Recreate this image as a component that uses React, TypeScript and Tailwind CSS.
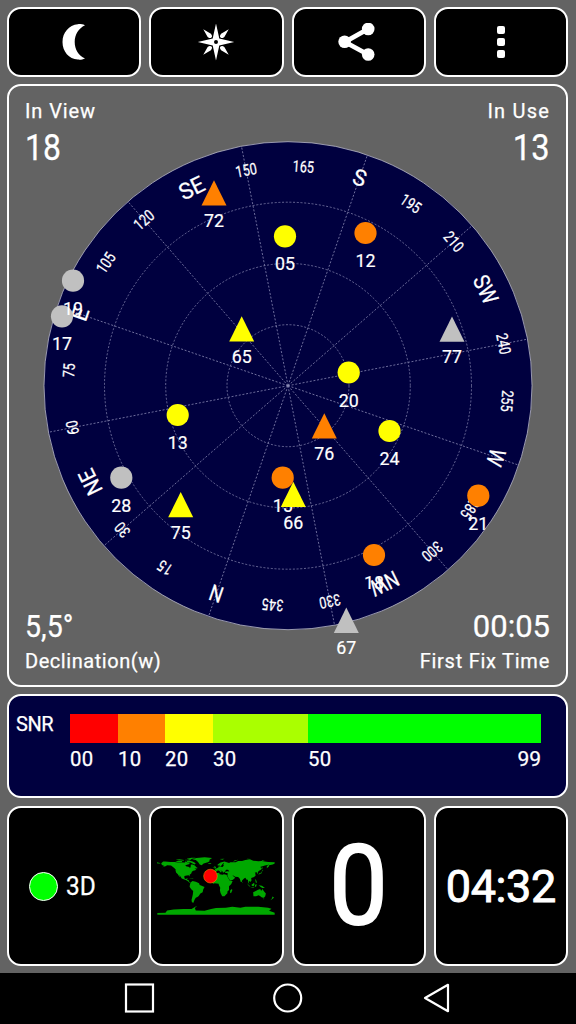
import type { ReactNode } from 'react';

type Shape = 'circle' | 'triangle';

interface Satellite {
  id: string;
  x: number;
  y: number;
  color: string;
  shape: Shape;
}

const NAVY = '#00003f';
const ORANGE = '#ff8000';
const YELLOW = '#ffff00';
const GREY = '#c0c0c0';

const CX = 288;
const CY = 385.7;
const RADIUS = 244;
// South sits slightly clockwise of the top of the disc
const ROTATION = 19;

const satellites: Satellite[] = [
  { id: '05', x: 285, y: 236.3, color: YELLOW, shape: 'circle' },
  { id: '12', x: 365.5, y: 233, color: ORANGE, shape: 'circle' },
  { id: '13', x: 177.7, y: 415, color: YELLOW, shape: 'circle' },
  { id: '15', x: 282.7, y: 477.7, color: ORANGE, shape: 'circle' },
  { id: '17', x: 62, y: 316.3, color: GREY, shape: 'circle' },
  { id: '18', x: 374, y: 555, color: ORANGE, shape: 'circle' },
  { id: '19', x: 73, y: 280.7, color: GREY, shape: 'circle' },
  { id: '20', x: 348.7, y: 372.5, color: YELLOW, shape: 'circle' },
  { id: '21', x: 478.3, y: 495.7, color: ORANGE, shape: 'circle' },
  { id: '24', x: 389.5, y: 431, color: YELLOW, shape: 'circle' },
  { id: '28', x: 121.3, y: 477.7, color: GREY, shape: 'circle' },
  { id: '65', x: 241.7, y: 329, color: YELLOW, shape: 'triangle' },
  { id: '66', x: 293.3, y: 494.5, color: YELLOW, shape: 'triangle' },
  { id: '67', x: 346.3, y: 620.3, color: GREY, shape: 'triangle' },
  { id: '72', x: 214, y: 193, color: ORANGE, shape: 'triangle' },
  { id: '75', x: 180.7, y: 504.7, color: YELLOW, shape: 'triangle' },
  { id: '76', x: 324.3, y: 426, color: ORANGE, shape: 'triangle' },
  { id: '77', x: 452, y: 329.2, color: GREY, shape: 'triangle' },
];

const cardinals: Record<number, string> = {
  0: 'N',
  45: 'NE',
  90: 'E',
  135: 'SE',
  180: 'S',
  225: 'SW',
  270: 'W',
  315: 'NW',
};

const headings = Array.from({ length: 24 }, (_, i) => i * 15);
const spokes = Array.from({ length: 12 }, (_, i) => i * 30);

function labelWidth(text: string, cardinal: boolean) {
  if (!cardinal) return text.length * 7.1;
  if (text === 'NW' || text === 'SW') return 29;
  if (text.length === 2) return 26;
  return text === 'W' ? 17 : 13;
}

function Tile({ children }: { children: ReactNode }) {
  return (
    <div className="flex items-center justify-center rounded-[14px] border-2 border-white bg-black">
      {children}
    </div>
  );
}

function MoonIcon() {
  return (
    <svg className="h-9 w-6" viewBox="62 24 24 36" fill="#fff">
      <path d="M85 25.2C82 24.1 80 24 77.8 24.2C69 25 62.5 32.5 62.5 42S69 59 77.8 59.6C80.5 59.8 82.5 59.6 85 58.4C78.5 55.5 74.7 49.5 74.7 42S78.5 28.3 85 25.2Z" />
    </svg>
  );
}

function StarIcon() {
  return (
    <svg className="h-10 w-10" viewBox="-20 -20 40 40" fill="#fff">
      <path
        fillRule="evenodd"
        d="M0-18.5L3.3-3.5L18.2 0L3.3 3.5L0 18.5L-3.3 3.5L-18.2 0L-3.3-3.5ZM0-2A2 2 0 1 0 0 2A2 2 0 1 0 0-2Z"
      />
      {[45, 135, 225, 315].map((a) => (
        <path key={a} transform={`rotate(${a})`} d="M0-18L2.3-9.5C2-6.8 1-6.5 0-6.5S-2-6.8-2.3-9.5Z" />
      ))}
    </svg>
  );
}

function ShareIcon() {
  return (
    <svg className="-ml-[3px] h-[38px] w-[38px]" viewBox="338 23 38 38" fill="#fff">
      <path d="M368 29L345 42L368 54.5" fill="none" stroke="#fff" strokeWidth="4.8" />
      <circle cx="344.6" cy="41.7" r="6.3" />
      <circle cx="368.2" cy="29" r="6.3" />
      <circle cx="368.2" cy="54.5" r="6.3" />
    </svg>
  );
}

function Marker({ sat }: { sat: Satellite }) {
  return (
    <g>
      {sat.shape === 'circle' ? (
        <circle cx={sat.x} cy={sat.y} r="11.1" fill={sat.color} />
      ) : (
        <path d={`M${sat.x} ${sat.y - 12.7}l12.5 25.3h-25z`} fill={sat.color} />
      )}
      <text
        x={sat.x}
        y={sat.y + 34}
        textAnchor="middle"
        fontSize="18.5"
        fontWeight="400"
        stroke="#fff"
        strokeWidth="0.2"
        textLength="20"
        lengthAdjust="spacingAndGlyphs"
      >
        {sat.id}
      </text>
    </g>
  );
}

function SkyView() {
  return (
    <svg className="h-full w-full [grid-area:1/1]" viewBox="9 86 557 599" fill="#fff">
      <circle cx={CX} cy={CY} r={RADIUS} fill={NAVY} stroke="#b8b8c8" strokeWidth="0.8" />
      <g stroke="#9090b8" strokeWidth="0.7" strokeDasharray="2 1.7" fill="none">
        {[61, 122.3, 183.5].map((r) => (
          <circle key={r} cx={CX} cy={CY} r={r} />
        ))}
        {spokes.map((a) => (
          <path key={a} d={`M${CX} ${CY}v-${RADIUS}`} transform={`rotate(${a + ROTATION} ${CX} ${CY})`} />
        ))}
      </g>
      {headings.map((h) => {
        const isCardinal = h in cardinals;
        const text = isCardinal ? cardinals[h] : String(h);
        return (
          <text
            key={h}
            x={CX}
            y={CY - (isCardinal ? 212 : 214)}
            textAnchor="middle"
            fontSize={isCardinal ? 22.5 : 16}
            fontWeight="400"
            stroke="#fff"
            strokeWidth="0.25"
            textLength={labelWidth(text, isCardinal)}
            lengthAdjust="spacingAndGlyphs"
            transform={`rotate(${h - 180 + ROTATION} ${CX} ${CY})`}
          >
            {text}
          </text>
        );
      })}
      {satellites.map((sat) => (
        <Marker key={sat.id} sat={sat} />
      ))}
    </svg>
  );
}

// Coastlines in degrees: x is longitude, y is negative latitude
function WorldMap() {
  return (
    <svg className="-ml-px h-[58px] w-[118px]" viewBox="-181 -85 362 176" fill="#00a800" preserveAspectRatio="none">
      {/* North and Central America */}
      <path d="M-168-66L-162-71L-156-71L-140-69.5L-128-70L-115-68L-108-68L-95-68L-94-72L-86-68L-82-69L-81-64L-94-60L-92-57L-82-55L-80-51L-78-55L-77-62L-72-62L-65-59L-60-54L-56-52L-60-50L-66-50L-60-46L-66-44L-70-43L-74-40L-76-35L-81-31L-80-26L-82-28L-84-30L-90-29L-97-27L-97-22L-95-18L-91-19L-87-21L-89-16L-84-15L-83-10L-78-9L-80-7L-84-9L-88-13L-95-16L-105-20L-109-26L-114-31L-110-24L-113-26L-117-33L-122-37L-124-43L-124-48L-131-54L-138-59L-150-60L-155-57L-165-54L-158-58L-166-61Z" />
      {/* Arctic islands and Greenland */}
      <path d="M-125-72L-115-74L-105-73L-103-69L-115-69ZM-90-70L-88-74L-80-74L-72-71L-62-66L-66-62L-72-65L-78-68ZM-124-77L-112-78L-98-76L-100-74L-112-75ZM-95-77L-80-76L-90-80L-75-83L-62-83L-75-79L-80-75L-93-75ZM-73-78L-60-82L-35-84L-12-82L-20-77L-20-72L-25-69L-38-65L-44-60L-50-62L-53-67L-55-70L-62-76Z" />
      <path d="M-24-66L-14-66L-16-63.5L-23-63.5ZM-84-22L-75-20L-68-19L-72-18L-78-20ZM-181-69L-172-67L-170-65L-178-65L-181-66Z" />
      {/* South America */}
      <path d="M-78-8L-72-12L-62-10L-52-5L-50 0L-44 2L-35 6L-39 13L-41 22L-48 26L-53 33L-57 36L-62 39L-65 43L-68 50L-69 54L-74 52L-75 45L-73 37L-71 28L-70 18L-76 13L-81 5L-80-1Z" />
      {/* Africa and Madagascar */}
      <path d="M-17-15L-16-25L-10-31L-5-35L10-37L11-33L20-31L24-33L32-31L37-22L43-12L51-12L47-3L40 4L40 15L35 20L35 25L31 29L26 34L19 34L14 24L12 16L13 8L9 1L8-4L-4-5L-8-4L-14-9ZM44 16L49 12L50 16L46 25L43 23Z" />
      {/* Europe and Asia */}
      <path d="M-9-37L-9-43L-1-44L-4-48L4-52L8-54L8-57L12-56L20-55L24-59L22-62L25-65L22-66L18-61L14-56L11-59L5-59L5-62L14-68L26-71L40-67L44-69L60-69L68-73L80-73L90-76L104-78L114-74L130-72L140-73L160-70L180-69L180-65L174-62L163-60L162-56L156-51L156-58L164-62L150-59L135-55L141-52L138-46L132-43L128-39L129-35L126-35L125-39L118-39L122-37L120-34L122-30L117-24L108-21L109-14L105-9L101-13L100-8L104-2L98-8L98-16L94-16L90-22L86-20L80-14L79-9L76-9L73-19L68-24L58-25L56-27L50-30L56-24L59-22L52-16L44-13L39-20L35-28L36-36L28-37L27-40L35-42L41-41L37-46L31-46L28-42L24-38L21-38L20-42L13-45L18-40L15-38L9-44L3-43L0-39Z" />
      <path d="M-5-50L1-51L-2-56L-5-58L-5-54ZM-10-52L-6-54L-8-55ZM11-79L26-80L20-77ZM52-71L58-75L68-77L57-72ZM95-80L105-79L98-78ZM140-75L150-75L142-73Z" />
      {/* Islands of the Pacific and Indian oceans */}
      <path d="M130-31L136-34L140-36L141-41L145-44L142-45L139-38L132-35ZM142-46L144-54L142-54ZM80-9L82-7L80-6ZM120-18L123-15L126-7L122-8ZM95-5L104 3L106 6L101 3ZM105 6L114 7L119 9L112 8ZM109-1L117-7L118-1L115 4L110 2ZM119 5L120-1L125-2L123 5ZM131 1L141 2L150 9L142 9L136 5Z" />
      {/* Australia and New Zealand */}
      <path d="M114 22L122 18L129 14L136 12L137 16L141 17L142 11L147 19L153 26L151 34L147 39L141 38L136 34L131 31L123 34L115 34ZM145 41L148 41L147 44ZM173 35L178 38L174 42L167 46L172 40Z" />
      {/* Antarctica */}
      <path d="M-180 85L-155 84L-150 77L-130 74L-100 73L-75 73L-62 65L-58 64L-65 70L-62 77L-35 78L-15 73L0 70L30 69L50 66L75 69L90 66L130 66L160 69L170 72L163 78L180 84L180 90L-180 90Z" />
      <circle cx="-17" cy="-27" r="21" fill="#ff0000" stroke="#ffa000" strokeWidth="1.5" />
    </svg>
  );
}

const segments = [
  { label: '00', className: 'w-[48px] bg-[#ff0000]' },
  { label: '10', className: 'w-[47px] bg-[#ff8000]' },
  { label: '20', className: 'w-[48px] bg-[#ffff00]' },
  { label: '30', className: 'w-[95px] bg-[#aaff00]' },
  { label: '50', className: 'w-[233px] bg-[#00ff00]' },
];

function SnrPanel() {
  return (
    <div className="mt-[7px] flex h-[104px] rounded-[14px] border-2 border-white bg-[#00003f] pt-[18px] pl-[7px]">
      <div className="w-[54px] text-[20px] leading-5 tracking-[-0.5px]">SNR</div>
      <div>
        <div className="flex">
          {segments.map((s) => (
            <div key={s.label} className={s.className + ' h-[29px]'} />
          ))}
        </div>
        <div className="relative mt-[5px] flex text-[21px] leading-[22px]">
          {segments.map((s) => (
            <div key={s.label} className={s.className + ' bg-transparent'}>
              <span className="inline-block origin-left scale-x-[0.97] tracking-[0.3px]">{s.label}</span>
            </div>
          ))}
          <span className="absolute right-0">99</span>
        </div>
      </div>
    </div>
  );
}

export default function App() {
  return (
    <div className="flex h-[1024px] w-[576px] flex-col overflow-hidden bg-[#636363] font-['Roboto',sans-serif] font-normal text-white [-webkit-text-stroke:0.25px_white]">
      <div className="flex-1 pt-[7px] pr-[8px] pl-[7px]">
        <div className="grid h-[70px] grid-cols-4 gap-2">
          <Tile><MoonIcon /></Tile>
          <Tile><StarIcon /></Tile>
          <Tile><ShareIcon /></Tile>
          <Tile>
            <div className="flex flex-col gap-1">
              <i className="h-2 w-2 rounded-[2px] bg-white" />
              <i className="h-2 w-2 rounded-[2px] bg-white" />
              <i className="h-2 w-2 rounded-[2px] bg-white" />
            </div>
          </Tile>
        </div>

        <div className="mt-[7px] grid h-[603px] grid-cols-1 grid-rows-1 rounded-[14px] border-2 border-white">
          <SkyView />
          <div className="flex flex-col justify-between px-[16px] pt-[13px] pb-[12px] [grid-area:1/1]">
            <div className="flex justify-between">
              <div>
                <div className="text-[20px] leading-6 tracking-[0.9px]">In View</div>
                <div className="mt-[4px] origin-left scale-x-[0.85] text-[37.5px] leading-[40px]">18</div>
              </div>
              <div className="text-right">
                <div className="text-[20px] leading-6 tracking-[1.2px]">In Use</div>
                <div className="mt-[4px] origin-right scale-x-[0.87] text-[37.5px] leading-[40px]">13</div>
              </div>
            </div>
            <div className="flex justify-between">
              <div>
                <div className="origin-left scale-x-[0.92] text-[31px] leading-9">5,5°</div>
                <div className="mt-[4px] text-[20px] leading-6 tracking-[0.55px]">Declination(w)</div>
              </div>
              <div className="text-right">
                <div className="text-[31px] leading-9">00:05</div>
                <div className="mt-[4px] text-[20px] leading-6 tracking-[0.75px]">First Fix Time</div>
              </div>
            </div>
          </div>
        </div>

        <SnrPanel />

        <div className="mt-2 grid h-[160px] grid-cols-4 gap-2">
          <Tile>
            <div className="-ml-[22px] flex items-center gap-[8px]">
              <span className="h-[29px] w-[29px] rounded-full border border-white bg-[#00ff00]" />
              <span className="origin-left scale-x-[0.94] text-[26px] leading-none">3D</span>
            </div>
          </Tile>
          <Tile><WorldMap /></Tile>
          <Tile>
            <span className="scale-x-[0.93] text-[112px] leading-none [-webkit-text-stroke:2px_white]">0</span>
          </Tile>
          <Tile>
            <span className="text-[45px] leading-none tracking-[-0.4px] [-webkit-text-stroke:0.9px_white]">04:32</span>
          </Tile>
        </div>
      </div>

      <div className="h-[51px] bg-black">
        <svg className="h-[51px] w-[576px]" viewBox="0 973 576 51" fill="none" stroke="#fff" strokeWidth="2.2">
          <rect x="126" y="984.5" width="27" height="27" />
          <circle cx="287.7" cy="998" r="13.5" />
          <path d="M425 998L448 984.8V1011.2Z" strokeLinejoin="round" />
        </svg>
      </div>
    </div>
  );
}
